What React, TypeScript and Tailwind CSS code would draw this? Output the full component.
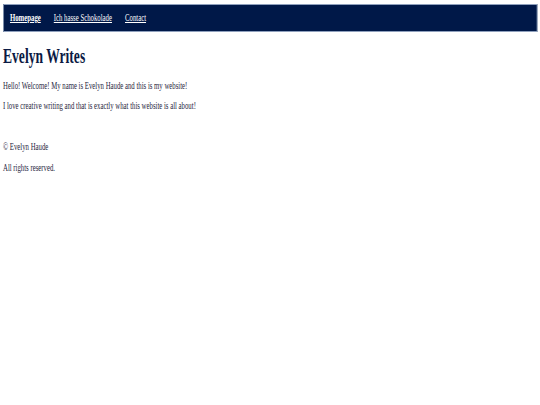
export default function App() {
  return (
    <div className="min-h-[405px] bg-white overflow-hidden">
      <div
        className="w-[806px] origin-top-left scale-x-[0.67] pt-[4px] px-[4.5px] text-[#1f2540]"
        style={{ fontFamily: '"Liberation Serif", "Times New Roman", serif' }}
      >
        <nav className="h-[28px] bg-[#001848] border border-[#8fa0bd] flex items-center gap-[19.4px] px-[9.4px] text-[10.1px] text-white">
          <a href="#" className="font-bold underline">Homepage</a>
          <a href="#" className="underline">Ich hasse Schokolade</a>
          <a href="#" className="underline">Contact</a>
        </nav>
        <main>
          <h1 className="mt-[11.5px] text-[20.3px] font-bold leading-[24px] text-[#0b1a44]">Evelyn Writes</h1>
          <p className="mt-[8.5px] text-[10.1px] leading-[20px]">Hello! Welcome! My name is Evelyn Haude and this is my website!</p>
          <p className="text-[10.1px] leading-[20px]">I love creative writing and that is exactly what this website is all about!</p>
        </main>
        <footer className="mt-[20px] text-[10.1px] leading-[21px]">
          <p>© Evelyn Haude</p>
          <p>All rights reserved.</p>
        </footer>
      </div>
    </div>
  );
}
